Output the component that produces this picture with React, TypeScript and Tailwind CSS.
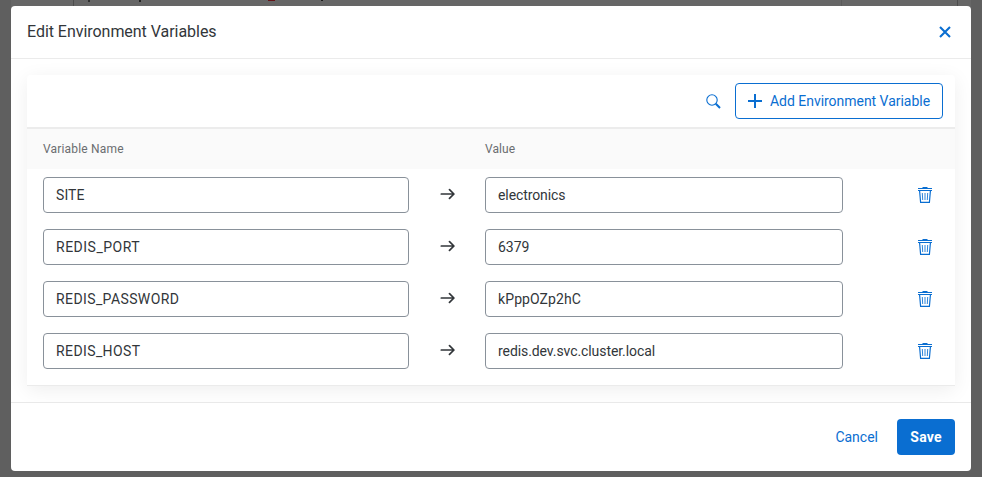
import React from 'react';

const rows = [
  { name: 'SITE', value: 'electronics', nameTracking: 'tracking-[0.1px]', valueTracking: 'tracking-[-0.1px]' },
  { name: 'REDIS_PORT', value: '6379', nameTracking: 'tracking-[0.5px]', valueTracking: 'tracking-[0px]' },
  { name: 'REDIS_PASSWORD', value: 'kPppOZp2hC', nameTracking: 'tracking-[0.4px]', valueTracking: 'tracking-[0.1px]' },
  { name: 'REDIS_HOST', value: 'redis.dev.svc.cluster.local', nameTracking: 'tracking-[0.4px]', valueTracking: 'tracking-[-0.08px]' },
];

function Trash() {
  return (
    <svg width="14" height="16" viewBox="0 0 14 16" fill="none" stroke="#0a6ed1" aria-hidden="true">
      <path d="M4.5 .5h5" strokeWidth="1" />
      <path d="M0 1.5h14M0 3.5h14" strokeWidth="1" />
      <path d="M1.6 4l1 11.4h8.8l1-11.4" strokeWidth="1.2" />
      <path d="M4.3 6l.4 7M7 6v7M9.7 6l-.4 7" strokeWidth="1" opacity=".85" />
    </svg>
  );
}

function Arrow() {
  return (
    <svg width="15" height="12" viewBox="0 0 15 12" fill="none" stroke="#32363a" strokeWidth="1.7" strokeLinecap="round" strokeLinejoin="round" aria-hidden="true">
      <path d="M1.3 6h12.6M9.5 1.6L13.9 6l-4.4 4.4" />
    </svg>
  );
}

function Field({ value, tracking, width }: { value: string; tracking: string; width: string }) {
  return (
    <div className={`${width} ${tracking} flex h-9 shrink-0 items-center rounded border border-[#89919a] bg-white px-3 text-sm`}>
      {value}
    </div>
  );
}

export default function App() {
  return (
    <div className="relative h-[477px] w-[982px] overflow-hidden bg-[#5f5f5f] px-[11px] pt-[6px] font-['Roboto','Liberation_Sans',sans-serif] text-[#32363a]">
      <div className="absolute top-0 left-[11px] h-[12px] w-[960px] bg-[#666]" />
      <div className="absolute top-0 left-[73px] h-[6px] w-px bg-[#4d4d4d]" />
      <div className="absolute top-0 left-[88px] h-[2px] w-[2px] bg-[#303030]" />
      <div className="absolute top-0 left-[139px] h-[2px] w-[2px] bg-[#222]" />
      <div className="absolute top-0 left-[268px] h-px w-[7px] bg-[#641216]" />
      <div className="absolute top-0 left-[321px] h-px w-[2px] bg-[#1c1c1c]" />
      <div className="absolute top-0 left-[841px] h-[6px] w-px bg-[#5b5b5b]" />
      <div className="absolute top-0 left-[957px] h-[6px] w-px bg-[#4d4d4d]" />
      <div className="relative flex h-[465px] flex-col overflow-hidden rounded bg-white">
        <header className="flex h-[53px] shrink-0 items-center justify-between border-b border-[#ebebeb] px-4">
          <h1 className="text-base tracking-[-0.04px]">Edit Environment Variables</h1>
          <button className="mr-1" aria-label="Close">
            <svg width="12" height="12" viewBox="0 0 12 12" stroke="#0a6ed1" strokeWidth="2.1" className="block">
              <path d="M1 1l10 10M11 1L1 11" />
            </svg>
          </button>
        </header>
        <main className="h-[344px] shrink-0 overflow-hidden border-b border-[#e9e9e9] px-4 pt-4">
          <section className="h-[311px] rounded-t border-b border-[#ebebeb] bg-white shadow-[0_4px_20px_rgba(0,0,0,0.07)]">
            <div className="flex h-[54px] items-center justify-end border-b-2 border-[#ececec] pr-3">
              <svg width="15" height="15" viewBox="0 0 15 15" fill="none" stroke="#0a6ed1" className="mr-[14px]" aria-hidden="true">
                <circle cx="6" cy="6" r="5.2" strokeWidth="1.1" />
                <path d="M9.8 9.8l4.2 4.2" strokeWidth="2" />
              </svg>
              <button className="flex h-9 w-[208px] items-center rounded border border-[#0a6ed1] pl-3 text-sm text-[#0a6ed1]">
                <svg width="14" height="14" viewBox="0 0 14 14" stroke="#0a6ed1" strokeWidth="2" className="mr-2 shrink-0" aria-hidden="true">
                  <path d="M7 0v14M0 7h14" />
                </svg>
                <span className="tracking-[-0.03px] whitespace-nowrap">Add Environment Variable</span>
              </button>
            </div>
            <div className="flex h-10 items-center bg-[#fafafa] px-4 text-xs text-[#6a6d70]">
              <span className="w-[442px] tracking-[0.18px]">Variable Name</span>
              <span className="tracking-[0.1px]">Value</span>
            </div>
            {rows.map((r) => (
              <div key={r.name} className="flex h-[52px] items-center pl-4">
                <Field value={r.name} tracking={r.nameTracking} width="w-[366px]" />
                <div className="flex w-[76px] justify-center pb-[3px]"><Arrow /></div>
                <Field value={r.value} tracking={r.valueTracking} width="w-[358px]" />
                <div className="ml-[75px]"><Trash /></div>
              </div>
            ))}
          </section>
        </main>
        <footer className="flex flex-1 items-center justify-end gap-[19px] px-4 text-sm">
          <button className="text-[#0a6ed1]">Cancel</button>
          <button className="h-9 w-[58px] rounded bg-[#0a6ed1] font-bold tracking-[0.2px] text-white">Save</button>
        </footer>
      </div>
    </div>
  );
}
